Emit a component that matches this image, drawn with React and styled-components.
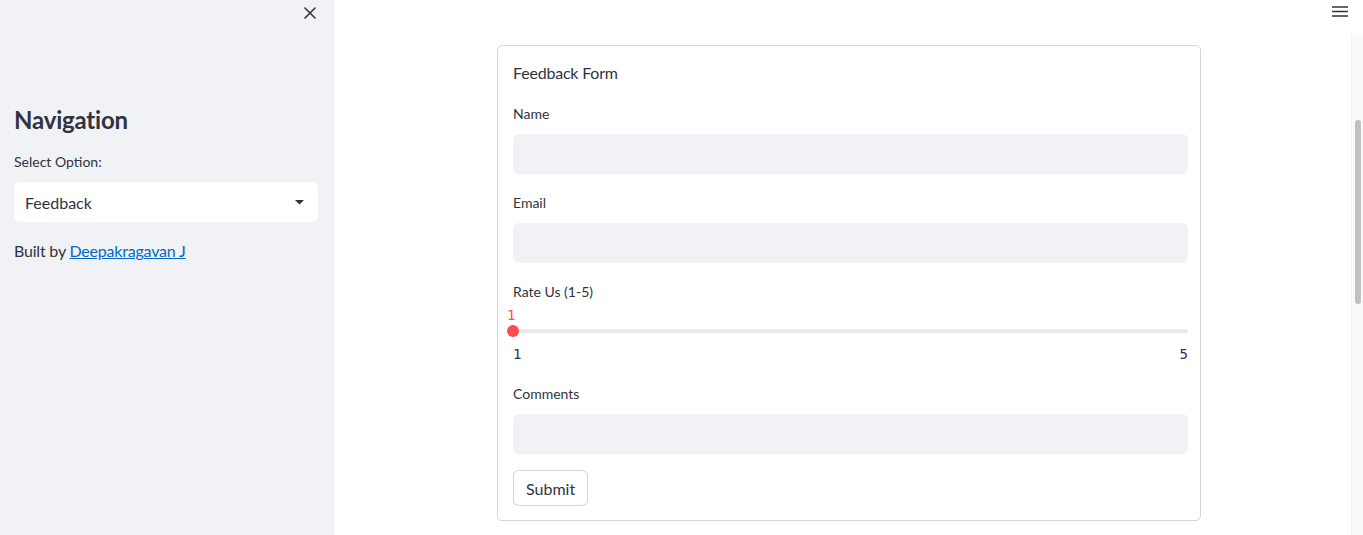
import React from 'react';
import styled, { createGlobalStyle } from 'styled-components';

const GlobalStyle = createGlobalStyle`
  html, body {
    margin: 0;
    padding: 0;
    height: 100%;
    overflow: hidden;
  }
  body {
    font-family: Lato, "Noto Sans", sans-serif;
    color: #31333f;
    background: #ffffff;
  }
  #root {
    height: 100%;
  }
`;

function App() {
  return (
    <>
      <GlobalStyle />
      <Page>
        <Sidebar>
          <CloseButton aria-label="Close sidebar">
            <svg width="12" height="12" viewBox="0 0 12 12">
              <path d="M1 1 L11 11 M11 1 L1 11" stroke="#31333f" strokeWidth="1.6" strokeLinecap="round" />
            </svg>
          </CloseButton>
          <SideTitle>Navigation</SideTitle>
          <Label>Select Option:</Label>
          <SelectBox>
            <span>Feedback</span>
            <svg width="9" height="5" viewBox="0 0 9 5">
              <path d="M0 0 H9 L4.5 4.5 Z" fill="#31333f" />
            </svg>
          </SelectBox>
          <Credit>
            Built by <a href="#">Deepakragavan J</a>
          </Credit>
        </Sidebar>

        <Main>
          <MenuButton aria-label="Main menu">
            <svg width="16" height="11" viewBox="0 0 16 11">
              <path d="M0 1 H16 M0 5.5 H16 M0 10 H16" stroke="#31333f" strokeWidth="1.5" />
            </svg>
          </MenuButton>
          <ScrollTrack>
            <ScrollThumb />
          </ScrollTrack>

          <Form>
            <FormTitle>Feedback Form</FormTitle>

            <Field>
              <Label>Name</Label>
              <Input />
            </Field>

            <Field>
              <Label>Email</Label>
              <Input />
            </Field>

            <Field>
              <Label>Rate Us (1-5)</Label>
              <Slider>
                <SliderValue>1</SliderValue>
                <Track>
                  <Thumb />
                </Track>
                <Ticks>
                  <span>1</span>
                  <span>5</span>
                </Ticks>
              </Slider>
            </Field>

            <Field>
              <Label>Comments</Label>
              <Input />
            </Field>

            <SubmitButton>Submit</SubmitButton>
          </Form>
        </Main>
      </Page>
    </>
  );
}

const Page = styled.div`
  display: flex;
  height: 100%;
`;

const Sidebar = styled.aside`
  position: relative;
  width: 334px;
  flex-shrink: 0;
  background: #f0f2f6;
  padding: 103px 16px 0 14px;
  box-sizing: border-box;
`;

const CloseButton = styled.button`
  position: absolute;
  top: 7px;
  left: 304px;
  padding: 0;
  border: none;
  background: none;
  display: flex;
`;

const SideTitle = styled.h2`
  margin: 0 0 13px;
  font-size: 24px;
  line-height: 34px;
  font-weight: 700;
  color: #31333f;
  letter-spacing: -0.2px;
`;

const Label = styled.div`
  font-size: 14px;
  line-height: 24px;
  height: 24px;
  margin-bottom: 8px;
  color: #31333f;
`;

const SelectBox = styled.div`
  height: 40px;
  background: #ffffff;
  border-radius: 6px;
  display: flex;
  align-items: center;
  justify-content: space-between;
  padding: 0 14px 0 11px;
  font-size: 16px;
  svg {
    margin-top: 1px;
  }
`;

const Credit = styled.p`
  margin: 17px 0 0;
  font-size: 16px;
  line-height: 24px;
  letter-spacing: -0.2px;
  a {
    color: #0068c9;
    text-decoration: underline;
  }
`;

const Main = styled.main`
  position: relative;
  flex: 1;
  display: flex;
  justify-content: center;
  align-items: flex-start;
  padding: 45px 0 0 1px;
`;

const MenuButton = styled.button`
  position: absolute;
  top: 6px;
  right: 15px;
  padding: 0;
  border: none;
  background: none;
  display: flex;
`;

const ScrollTrack = styled.div`
  position: absolute;
  top: 33px;
  right: 0;
  bottom: 0;
  width: 11px;
  background: #fafafa;
  border-left: 1px solid #f2f2f2;
`;

const ScrollThumb = styled.div`
  margin: 87px 0 0 3px;
  width: 6px;
  height: 184px;
  background: #c1c1c1;
  border-radius: 3px;
`;

const Form = styled.form`
  width: 704px;
  box-sizing: border-box;
  border: 1px solid rgba(49, 51, 63, 0.2);
  border-radius: 5px;
  padding: 15px 12px 14px 15px;
  display: flex;
  flex-direction: column;
  gap: 17px;
`;

const FormTitle = styled.div`
  font-size: 16px;
  line-height: 24px;
  letter-spacing: -0.2px;
`;

const Field = styled.div`
  display: flex;
  flex-direction: column;
`;

const Input = styled.div`
  height: 40px;
  background: #f0f2f6;
  border-radius: 6px;
`;

const Slider = styled.div`
  margin: -7px 0 1px;
  display: flex;
  flex-direction: column;
  font-family: "DejaVu Sans Mono", "Liberation Mono", monospace;
  font-size: 14px;
`;

const SliderValue = styled.div`
  color: #ff4b4b;
  line-height: 20px;
  margin-left: -6px;
`;

const Track = styled.div`
  position: relative;
  height: 4px;
  margin-top: 4px;
  background: #e6e9ef;
  border-radius: 2px;
`;

const Thumb = styled.div`
  position: absolute;
  left: -6px;
  top: -4px;
  width: 12px;
  height: 12px;
  border-radius: 50%;
  background: #ff4b4b;
`;

const Ticks = styled.div`
  display: flex;
  justify-content: space-between;
  margin-top: 11px;
  line-height: 20px;
  color: #31333f;
`;

const SubmitButton = styled.button`
  align-self: flex-start;
  height: 36px;
  margin-top: -1px;
  padding: 0 12px;
  background: #ffffff;
  border: 1px solid rgba(49, 51, 63, 0.2);
  border-radius: 6px;
  font-family: Lato, "Noto Sans", sans-serif;
  font-size: 16px;
  color: #31333f;
`;

export default App;
